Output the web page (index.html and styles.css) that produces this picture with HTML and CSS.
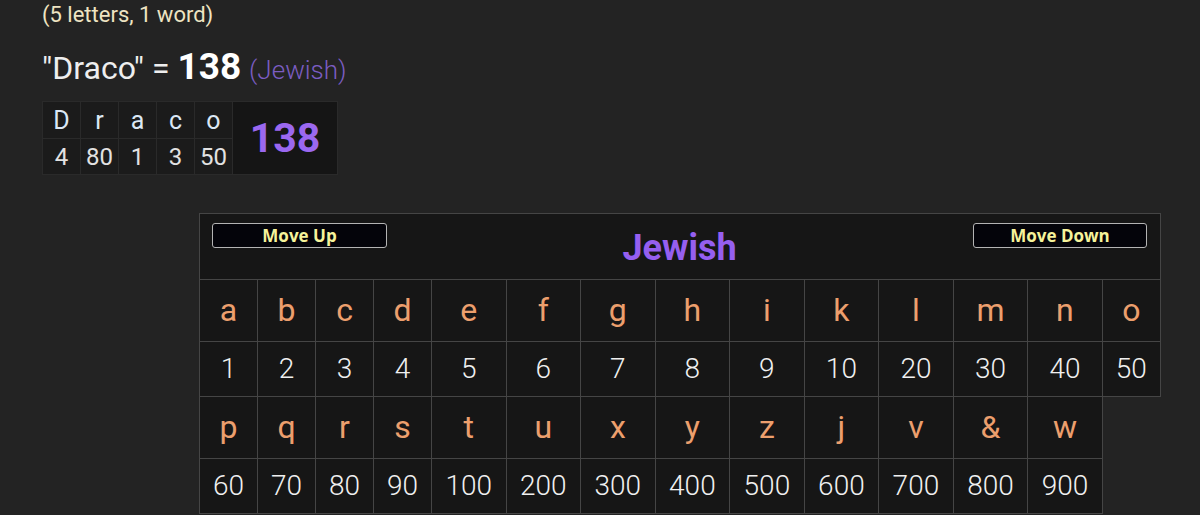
FILE: index.html
```html
<!DOCTYPE html>
<html lang="en">
<head>
<meta charset="utf-8">
<title>Draco - Jewish</title>
<link rel="stylesheet" href="styles.css">
</head>
<body>
<main class="page">
  <p class="count">(5 letters, 1 word)</p>
  <p class="title">"Draco" = <b class="total">138</b> <span class="cipher-name">(Jewish)</span></p>

  <table class="breakdown">
    <tr class="b-letters">
      <td>D</td><td>r</td><td>a</td><td>c</td><td>o</td>
      <td class="b-sum" rowspan="2">138</td>
    </tr>
    <tr class="b-values">
      <td>4</td><td>80</td><td>1</td><td>3</td><td>50</td>
    </tr>
  </table>

  <table class="chart">
    <colgroup>
      <col class="cn"><col class="cn"><col class="cn"><col class="cn">
      <col class="cw"><col class="cw"><col class="cw"><col class="cw"><col class="cw">
      <col class="cw"><col class="cw"><col class="cw"><col class="cw"><col class="cn">
    </colgroup>
    <tr>
      <td class="head" colspan="14">
        <div class="head-bar">
          <button class="move move-up" type="button">Move Up</button>
          <span class="cipher-title">Jewish</span>
          <button class="move move-down" type="button">Move Down</button>
        </div>
      </td>
    </tr>
    <tr class="letters">
      <td>a</td><td>b</td><td>c</td><td>d</td><td>e</td><td>f</td><td>g</td>
      <td>h</td><td>i</td><td>k</td><td>l</td><td>m</td><td>n</td><td>o</td>
    </tr>
    <tr class="values">
      <td>1</td><td>2</td><td>3</td><td>4</td><td>5</td><td>6</td><td>7</td>
      <td>8</td><td>9</td><td>10</td><td>20</td><td>30</td><td>40</td><td>50</td>
    </tr>
    <tr class="letters">
      <td>p</td><td>q</td><td>r</td><td>s</td><td>t</td><td>u</td><td>x</td>
      <td>y</td><td>z</td><td>j</td><td>v</td><td>&amp;</td><td>w</td>
    </tr>
    <tr class="values">
      <td>60</td><td>70</td><td>80</td><td>90</td><td>100</td><td>200</td><td>300</td>
      <td>400</td><td>500</td><td>600</td><td>700</td><td>800</td><td>900</td>
    </tr>
  </table>
</main>
</body>
</html>
```

FILE: styles.css
```css
html, body {
  margin: 0;
  padding: 0;
  background: #232323;
}

body {
  font-family: Roboto, "Noto Sans", "Liberation Sans", sans-serif;
  color: #eeeeee;
  overflow: hidden;
}

.page {
  padding: 2px 0 0 42px;
}

.count {
  margin: 0;
  font-size: 22px;
  line-height: 26px;
  color: #eee4c2;
}

.title {
  margin: 18px 0 0;
  height: 43px;
  font-size: 32px;
  line-height: 42px;
  color: #eeeeee;
  white-space: nowrap;
}

.total {
  font-size: 37px;
  font-weight: 700;
  color: #ffffff;
}

.cipher-name {
  font-size: 26px;
  font-weight: 300;
  color: #7b5dc2;
}

/* small word breakdown */
.breakdown {
  margin-top: 12px;
  border-collapse: collapse;
}

.breakdown td {
  padding: 0;
  border: 1px solid #2a2a2a;
  background: #1b1b1b;
  text-align: center;
  width: 37px;
}

.b-letters td {
  height: 36px;
  font-size: 25px;
  color: #dce8f5;
}

.b-values td {
  height: 35px;
  font-size: 24px;
  color: #e2e2e2;
}

.breakdown .b-sum {
  width: 104px;
  background: #151515;
  font-size: 41px;
  font-weight: 700;
  color: #9b68f0;
}

/* cipher chart */
.chart {
  margin: 38px 0 0 157px;
  width: 962px;
  table-layout: fixed;
  border-collapse: collapse;
}

.chart .cn { width: 58px; }
.chart .cw { width: 74.5px; }

.chart td {
  padding: 0;
  border: 1px solid #454545;
  background: #161616;
  text-align: center;
}

.chart .head {
  height: 65px;
  vertical-align: top;
}

.head-bar {
  display: grid;
  grid-template-columns: 1fr auto 1fr;
  align-items: center;
  height: 65px;
  padding: 0 13px 0 12px;
}

.move {
  align-self: start;
  margin-top: 9px;
  width: 175px;
  height: 25px;
  box-sizing: border-box;
  padding: 0;
  border: 1px solid #b4b4b4;
  border-radius: 3px;
  background: #04040a;
  color: #f6f39a;
  font-family: "Open Sans", "Liberation Sans", sans-serif;
  font-weight: 700;
  font-size: 17px;
  line-height: 21px;
}

.move-up { justify-self: start; }
.move-down { justify-self: end; width: 174px; }

.cipher-title {
  font-size: 36px;
  font-weight: 700;
  color: #955ff0;
  line-height: 40px;
  padding-top: 2px;
}

.letters td {
  height: 60.5px;
  font-size: 32px;
  color: #ec9f6d;
}

.values td {
  height: 54.5px;
  font-size: 28px;
  font-weight: 300;
  color: #f0f0f0;
}
```
